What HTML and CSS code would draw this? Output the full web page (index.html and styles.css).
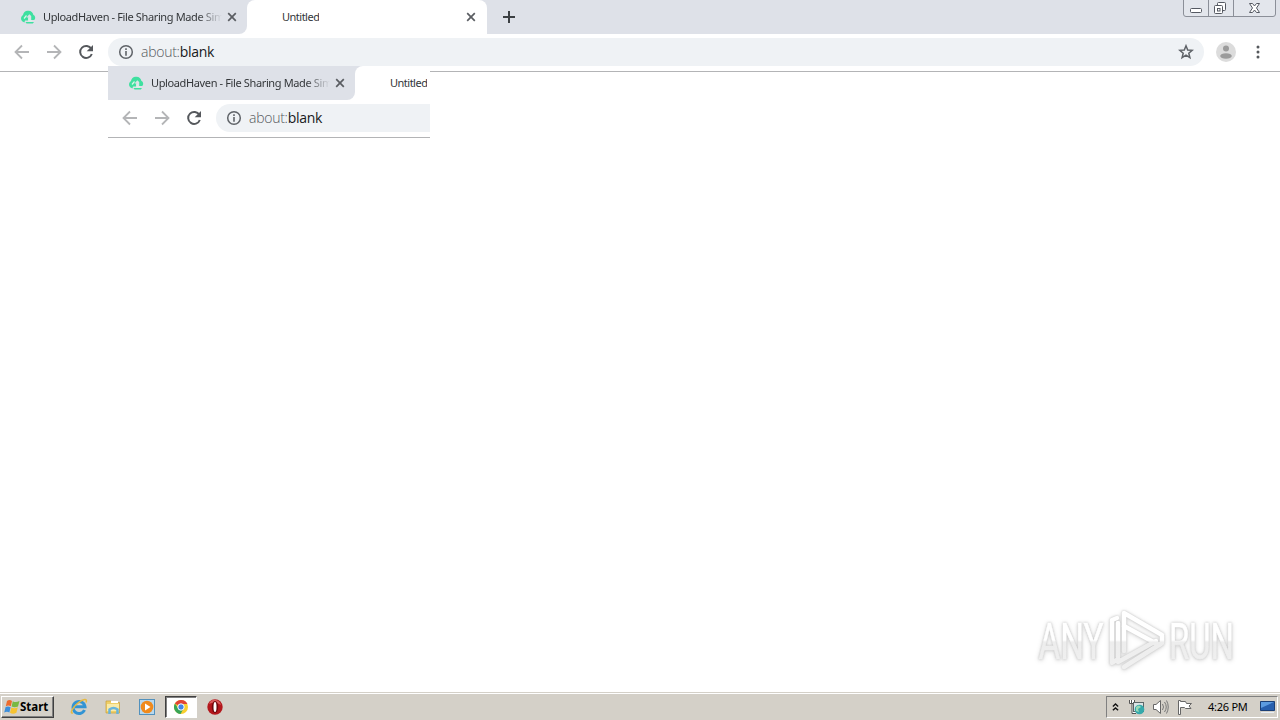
FILE: index.html
```
<!DOCTYPE html>
<html lang="en">
<head>
    <meta charset="UTF-8">
    <meta name="viewport" content="width=device-width, initial-scale=1.0">
    <title>Untitled</title>
    <link rel="stylesheet" href="styles.css">
</head>
<body>
    <svg class="defs">
        <symbol id="haven" viewBox="0 0 16 16">
            <path fill="#3fe0a0" d="M2.500 12.500C.5 11 .5 7.500 3 6C3.200 3.500 5.500 1.500 8 1.700C11 1.500 13 3.500 13.300 5.800C15.500 7 15.800 9.500 14.300 11H11.200V7L9.300 5.200L6.500 8.500H8.200V11.500H5L4.500 13.500Z"/>
            <path fill="none" stroke="#d9f5ea" stroke-width="1.200" d="M4 9.500L6.500 6.500M9 9V11.800H12"/>
            <path fill="#3fe0a0" d="M5.500 13H14L12.800 14.500H6.500Z"/>
        </symbol>
        <symbol id="close" viewBox="0 0 10 10">
            <path stroke="#5a5d62" stroke-width="1.700" d="M1.200 1.200L8.800 8.800M8.800 1.200L1.200 8.800"/>
        </symbol>
        <symbol id="back" viewBox="0 0 16 16">
            <path fill="none" stroke="#b4b5b7" stroke-width="1.800" d="M15 8H2M8 1.500L1.500 8L8 14.500"/>
        </symbol>
        <symbol id="forward" viewBox="0 0 16 16">
            <path fill="none" stroke="#b4b5b7" stroke-width="1.800" d="M1 8H14M8 1.500L14.500 8L8 14.500"/>
        </symbol>
        <symbol id="reload" viewBox="0 0 16 16">
            <path fill="none" stroke="#55585c" stroke-width="2" d="M13.300 4.800A6 6 0 1 0 13.800 10"/>
            <path fill="#55585c" d="M15 1V7.300H8.700Z"/>
        </symbol>
        <symbol id="info" viewBox="0 0 16 16">
            <circle cx="8" cy="8" r="6.300" fill="none" stroke="#5f6368" stroke-width="1.500"/>
            <path fill="#5f6368" d="M7.200 4.300H8.800V5.900H7.200ZM7.200 7.100H8.800V11.800H7.200Z"/>
        </symbol>
    </svg>

    <div class="browser">
        <div class="tabs">
            <div class="tab">
                <svg class="favicon"><use href="#haven"/></svg>
                <span class="title">UploadHaven - File Sharing Made Sim</span>
                <svg class="close"><use href="#close"/></svg>
            </div>
            <div class="tab active">
                <span class="title">Untitled</span>
                <svg class="close"><use href="#close"/></svg>
            </div>
            <svg class="new-tab" viewBox="0 0 12 12"><path stroke="#3c4043" stroke-width="2" d="M6 0V12M0 6H12"/></svg>
            <svg class="window-buttons" viewBox="0 0 94 18">
                <path fill="#e3e6ec" stroke="#8b8f98" d="M.5 0V14Q.5 16.500 3 16.500H90Q92.500 16.500 92.500 14V0M25.500 0V16M50.500 0V16"/>
                <g fill="#fff" stroke="#555962">
                    <rect x="7.500" y="8.500" width="11" height="4" rx="1"/>
                    <rect x="34.500" y="2.500" width="8" height="8" rx="1"/>
                    <rect x="31.500" y="5.500" width="8" height="8" rx="1"/>
                    <rect x="34.500" y="8.500" width="2.500" height="2.500"/>
                    <path d="M66.500 3.500H69.500L71.500 6L73.500 3.500H76.500L73.500 8L76.500 12.500H73.500L71.500 10L69.500 12.500H66.500L69.500 8Z"/>
                </g>
            </svg>
        </div>
        <div class="toolbar">
            <svg class="nav"><use href="#back"/></svg>
            <svg class="nav"><use href="#forward"/></svg>
            <svg class="nav"><use href="#reload"/></svg>
            <div class="address">
                <svg class="info"><use href="#info"/></svg>
                <span class="url">about:<b>blank</b></span>
                <svg class="star" viewBox="0 0 16 16"><path fill="none" stroke="#5f6368" stroke-width="1.500" d="M8 1.800L9.700 6L14.200 6.300L10.800 9.200L11.900 13.600L8 11.200L4.100 13.600L5.200 9.200L1.800 6.300L6.300 6Z"/></svg>
            </div>
            <svg class="avatar" viewBox="0 0 20 20">
                <circle cx="10" cy="10" r="10" fill="#dcdcdc"/>
                <circle cx="10" cy="6.500" r="3" fill="#9b9b9b"/>
                <ellipse cx="10" cy="14" rx="5.800" ry="2.800" fill="#9b9b9b"/>
            </svg>
            <svg class="menu" viewBox="0 0 4 14"><g fill="#55585c"><circle cx="2" cy="2" r="1.500"/><circle cx="2" cy="7" r="1.500"/><circle cx="2" cy="12" r="1.500"/></g></svg>
        </div>
    </div>

    <!-- leftover repaint of the browser header -->
    <div class="ghost">
        <div class="browser">
            <div class="tabs">
                <div class="tab">
                    <svg class="favicon"><use href="#haven"/></svg>
                    <span class="title">UploadHaven - File Sharing Made Sim</span>
                    <svg class="close"><use href="#close"/></svg>
                </div>
                <div class="tab active">
                    <span class="title">Untitled</span>
                </div>
            </div>
            <div class="toolbar">
                <svg class="nav"><use href="#back"/></svg>
                <svg class="nav"><use href="#forward"/></svg>
                <svg class="nav"><use href="#reload"/></svg>
                <div class="address">
                    <svg class="info"><use href="#info"/></svg>
                    <span class="url">about:<b>blank</b></span>
                </div>
            </div>
        </div>
    </div>

    <main class="page">
        <svg class="watermark" viewBox="0 0 210 70">
            <defs>
                <linearGradient id="fade" x1="0" y1="0" x2="0" y2="70" gradientUnits="userSpaceOnUse">
                    <stop offset=".5" stop-color="#fff"/>
                    <stop offset=".53" stop-color="#ededed"/>
                    <stop offset="1" stop-color="#f1f1f1"/>
                </linearGradient>
            </defs>
            <g class="word" fill="url(#fade)" stroke="url(#fade)" stroke-width=".6">
                <text x="8.500" y="54" textLength="65" lengthAdjust="spacingAndGlyphs">ANY</text>
                <text x="139" y="54" textLength="65" lengthAdjust="spacingAndGlyphs">RUN</text>
            </g>
            <g class="mark" fill="none" stroke="url(#fade)" stroke-width="4.500" stroke-linejoin="round" stroke-linecap="round">
                <path d="M94 46V8L132 30"/>
                <path d="M94 21L129 40"/>
                <path d="M87 13L82 15V58L88 54M88 18V52"/>
                <path d="M132 31V38L94 62M126 36L88 57"/>
            </g>
        </svg>
    </main>

    <footer class="taskbar">
        <div class="start">
            <svg viewBox="0 0 16 16">
                <path fill="#ed6b2d" d="M3 2Q5.500 0 8 2L6.800 7.300Q4.300 5.800 1.800 7.300Z"/>
                <path fill="#79b943" d="M8.800 2.200Q11.500 4 15.500 2L14 7.400Q10.700 9 7.600 7.500Z"/>
                <path fill="#3c8edb" d="M1.600 8.100Q4 6.700 6.600 8.200L5.400 13.500Q3 12 .2 13.500Z"/>
                <path fill="#f7c331" d="M7.400 8.400Q10.500 10 13.800 8.300L12.400 13.800Q9 15.500 6 13.800Z"/>
            </svg>
            <span>Start</span>
        </div>
        <div class="launch">
            <div class="task">
                <svg viewBox="0 0 18 18">
                    <path fill="none" stroke="#3294d4" stroke-width="3" d="M14.500 12A6 6 0 1 1 15 8.800H5"/>
                    <path fill="none" stroke="#e6b941" stroke-width="1.500" d="M3 15C-1 16 3 9 8 5C13 1 18 0 16 4.500"/>
                </svg>
            </div>
            <div class="task">
                <svg viewBox="0 0 18 18">
                    <path fill="#efcf68" stroke="#c99f38" stroke-width=".7" d="M2 3H7L8.500 4.500H15.500V15H2Z"/>
                    <path fill="#f9eaa8" d="M3 6H15V13H3Z"/>
                    <path fill="#fff" d="M7 3H14V5H7Z"/>
                    <path fill="none" stroke="#67b4dc" stroke-width="2.500" d="M5.500 16V11.500Q9.500 8.500 13.500 11.500V16"/>
                </svg>
            </div>
            <div class="task">
                <svg viewBox="0 0 18 18">
                    <rect x="1.500" y="1.500" width="15" height="15" fill="#b8d8ee" stroke="#5291bd"/>
                    <circle cx="9" cy="9" r="6.300" fill="#f08a1c"/>
                    <path fill="#fff" d="M7 5.500L12.500 9L7 12.500Z"/>
                </svg>
            </div>
            <div class="task pressed">
                <svg viewBox="0 0 18 18">
                    <circle cx="9" cy="9" r="7" fill="#f9cf2f"/>
                    <path fill="#e24435" d="M9 9L2.900 5.500A7 7 0 0 1 15.400 6H9Z"/>
                    <path fill="#38a557" d="M2.900 5.500A7 7 0 0 0 8.600 16L11.500 10.500L9 9L6.300 10.500Z"/>
                    <circle cx="9" cy="9" r="3.200" fill="#4285e8" stroke="#fff" stroke-width="1"/>
                </svg>
            </div>
            <div class="task">
                <svg viewBox="0 0 18 18">
                    <circle cx="9" cy="9" r="7.700" fill="#b3171c"/>
                    <path fill="#d95c5c" d="M3 6Q5 1 10 2Q14 3 15 7Q9 3 3 6Z"/>
                    <ellipse cx="9" cy="9" rx="3.200" ry="6" fill="#6d080c"/>
                    <ellipse cx="9" cy="9" rx="1.500" ry="5" fill="#fff"/>
                </svg>
            </div>
        </div>
        <div class="tray">
            <svg class="chevrons" viewBox="0 0 8 10"><path fill="none" stroke="#111" stroke-width="1.600" d="M1 4.300L4 1.500L7 4.300M1 8.800L4 6L7 8.800"/></svg>
            <svg class="net" viewBox="0 0 17 16">
                <path fill="#fff" stroke="#555" d="M1.500 1V4.500H6.500V1M3.500 1V4M4 4.500V14.500H8"/>
                <rect x="5.500" y="3.500" width="10" height="9" fill="#dce5e7" stroke="#5c6668"/>
                <circle cx="11.500" cy="10.500" r="4.800" fill="#36a9ab"/>
                <path fill="#9bd9b5" d="M8 8Q11 5 13 8L10 10L11 13L8 12Z"/>
            </svg>
            <svg class="sound" viewBox="0 0 17 16">
                <path fill="#fff" stroke="#666" d="M1.500 5.500H4L8.500 1.500V14.500L4 10.500H1.500Z"/>
                <path fill="none" stroke="#777" d="M10.500 5Q12.500 8 10.500 11M12.500 3Q16 8 12.500 13M14.500 1.500Q18 8 14.500 14.500"/>
            </svg>
            <svg class="flag" viewBox="0 0 17 16"><path fill="#fff" stroke="#666" d="M2.500 15.500V1.500H4.500V2.500H9.500L10.500 4.500H15.500L13 7L15 9.500H9.500L8.500 8.500H4.500V15.500Z"/></svg>
            <span class="clock">4:26 PM</span>
            <svg class="desktop" viewBox="0 0 17 14">
                <path fill="#275fae" stroke="#1b3f76" d="M1.500 1.500H15.500V10.500H1.500Z"/>
                <path fill="#5c9be0" d="M2 2H15L2 8Z"/>
                <path fill="#e7edf4" d="M2 12H15V13H2Z"/>
            </svg>
        </div>
    </footer>
</body>
</html>
```
FILE: styles.css
```
* {
    box-sizing: border-box;
}
body {
    margin: 0;
    height: 100vh;
    display: flex;
    flex-direction: column;
    overflow: hidden;
    background: #fff;
    font-family: "Noto Sans", "DejaVu Sans", sans-serif;
    font-size: 11px;
    color: #333639;
}
svg {
    display: block;
    flex: none;
}
.defs {
    position: absolute;
    width: 0;
    height: 0;
}
.browser {
    width: 1280px;
    height: 72px;
    flex: none;
    border-bottom: 1px solid #b3b4b6;
    background: #fff;
}
/* white behind the rounded corner between the two tabs */
.tabs {
    height: 34px;
    display: flex;
    align-items: center;
    background: linear-gradient(to right, #dee1e8 235px, #fff 235px, #fff 247px, #dee1e8 247px);
}
.tab {
    width: 247px;
    height: 34px;
    padding: 0 10px 0 20px;
    display: flex;
    align-items: center;
    background: #dee1e8;
    border-bottom-right-radius: 8px;
}
.tabs .active {
    width: 240px;
    padding: 0 11px 0 35px;
    background: #fff;
    border-radius: 8px 8px 0 0;
}
.favicon {
    width: 16px;
    height: 16px;
    margin-right: 7px;
}
.title {
    width: 180px;
    padding-bottom: 2px;
    overflow: hidden;
    white-space: nowrap;
    letter-spacing: -0.37px;
    -webkit-mask-image: linear-gradient(to right, #000 155px, transparent 179px);
    mask-image: linear-gradient(to right, #000 155px, transparent 179px);
}
.active .title {
    width: auto;
    letter-spacing: -0.5px;
    -webkit-mask-image: none;
    mask-image: none;
}
.close {
    width: 10px;
    height: 10px;
    margin-left: auto;
}
.new-tab {
    width: 12px;
    height: 12px;
    margin-left: 16px;
}
.window-buttons {
    width: 94px;
    height: 18px;
    margin-left: auto;
    margin-right: 3px;
    align-self: flex-start;
}
.toolbar {
    height: 37px;
    padding: 4px 20px 5px 14px;
    display: flex;
    align-items: center;
}
.nav {
    width: 16px;
    height: 16px;
    margin-right: 16px;
}
.address {
    width: 1096px;
    height: 28px;
    margin-left: -2px;
    padding: 0 10px;
    display: flex;
    align-items: center;
    flex: none;
    border-radius: 14px;
    background: #eff2f5;
}
.info {
    width: 16px;
    height: 16px;
    margin-right: 7px;
}
.url {
    padding-bottom: 2px;
    font-family: "Open Sans", "Noto Sans", sans-serif;
    font-size: 14px;
    font-weight: 300;
    letter-spacing: -0.27px;
    color: #55595d;
}
.url b {
    font-weight: 400;
    color: #17191b;
}
.star {
    width: 16px;
    height: 16px;
    margin-left: auto;
}
.avatar {
    width: 20px;
    height: 20px;
    margin-left: 12px;
}
.menu {
    width: 4px;
    height: 14px;
    margin-left: auto;
}
.ghost {
    position: absolute;
    left: 108px;
    top: 66px;
    width: 322px;
    height: 72px;
    overflow: hidden;
}
.page {
    flex: 1;
    display: flex;
    align-items: flex-end;
    justify-content: flex-end;
    padding: 0 40px 17px 0;
}
.watermark {
    width: 210px;
    height: 70px;
    filter: drop-shadow(0 0 1px #c4c4c4) drop-shadow(0 1px 2px #ddd);
}
.word {
    font-family: Roboto, sans-serif;
    font-size: 50px;
}
.taskbar {
    height: 28px;
    flex: none;
    display: flex;
    align-items: center;
    padding: 2px 2px 2px 1px;
    border-top: 1px solid #d4d0c8;
    box-shadow: inset 0 1px #fff;
    background: #d4d0c8;
    color: #000;
}
.start {
    width: 53px;
    height: 22px;
    display: flex;
    align-items: center;
    padding-left: 2px;
    border: 1px solid;
    border-color: #fff #404040 #404040 #fff;
    box-shadow: inset -1px -1px #808080;
    font-size: 11.5px;
    font-weight: bold;
}
.start svg {
    width: 16px;
    height: 16px;
}
.launch {
    display: flex;
    margin-left: 9px;
}
.task {
    width: 32px;
    height: 22px;
    margin-right: 2px;
    display: flex;
    align-items: center;
    justify-content: center;
}
.task svg {
    width: 18px;
    height: 18px;
}
.pressed {
    background: #fff;
    border: 1px solid;
    border-color: #404040 #fff #fff #404040;
    box-shadow: inset 1px 1px #808080;
}
.tray {
    width: 172px;
    height: 22px;
    margin-left: auto;
    padding-left: 5px;
    display: flex;
    align-items: center;
    border: 1px solid;
    border-color: #808080 #fff #fff #808080;
}
.chevrons {
    width: 7px;
    height: 10px;
    margin-right: 9px;
}
.net, .sound, .flag {
    width: 17px;
    height: 16px;
    margin-right: 7px;
}
.clock {
    width: 51px;
    margin-left: 8px;
    white-space: nowrap;
    letter-spacing: -0.25px;
}
.desktop {
    width: 17px;
    height: 14px;
}
```
